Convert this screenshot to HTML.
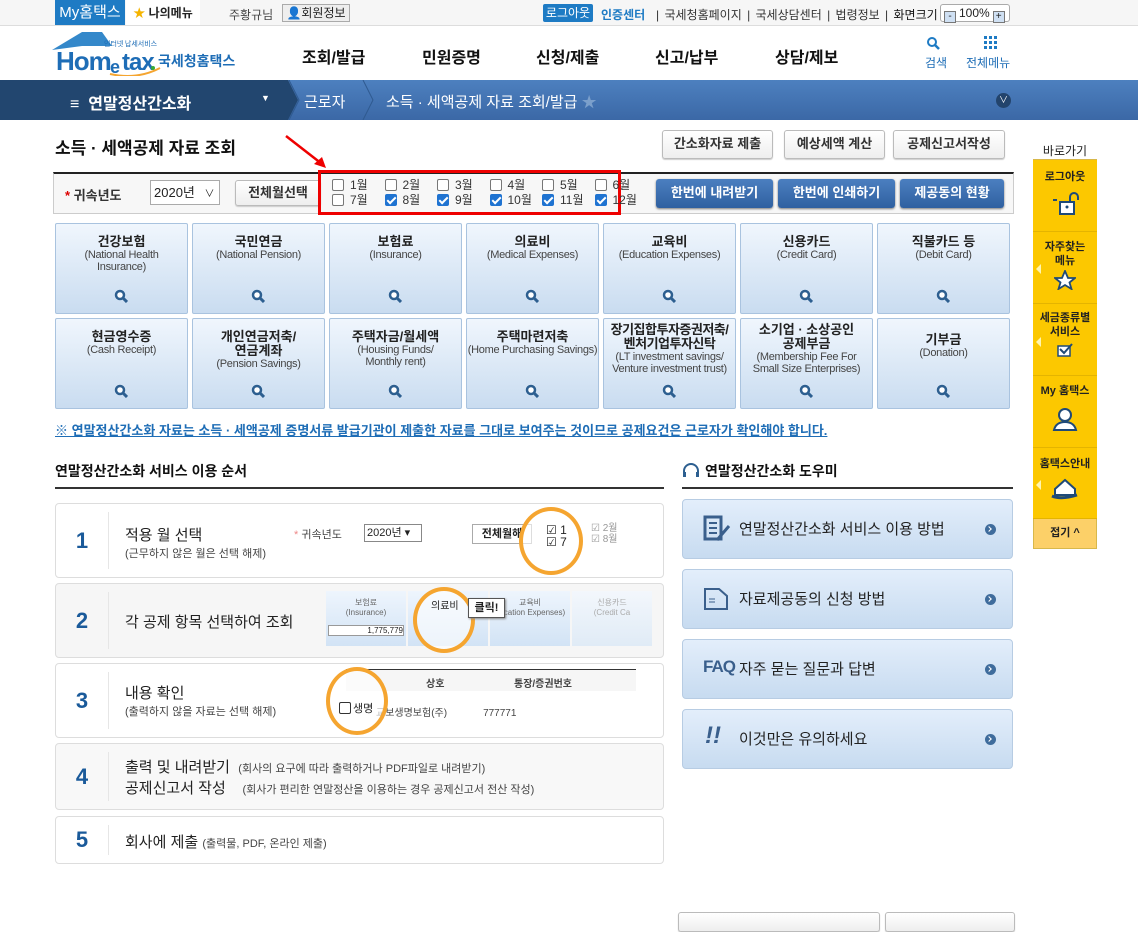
<!DOCTYPE html>
<html><head><meta charset="utf-8">
<style>
*{margin:0;padding:0;box-sizing:border-box}
body{width:1138px;height:920px;overflow:hidden;background:#fff;font-family:"Liberation Sans","Noto Sans CJK KR","NanumGothic",sans-serif;color:#222;position:relative;font-size:12px}
.a{position:absolute}
.top{left:0;top:0;width:1138px;height:26px;background:#f6f6f6;border-bottom:1px solid #ddd}
.nav{left:0;top:80px;width:1138px;height:40px;background:linear-gradient(#4d80bf,#3b68a6)}
.menu{top:44px;font-size:16px;font-weight:bold;color:#111}
.btn{border:1px solid #bbb;border-radius:3px;background:linear-gradient(#fff,#eee);font-size:13px;font-weight:bold;color:#333;text-align:center;line-height:26px;box-shadow:0 1px 1px #ccc}
.bb{border-radius:3px;background:linear-gradient(#4b7fc0,#2f60a0);color:#fff;font-size:13px;font-weight:bold;text-align:center;line-height:28px;box-shadow:0 1px 2px #777}
.cell{width:133px;height:91px;border:1px solid #a9c3df;border-radius:2px;background:linear-gradient(#f0f6fd,#c9dcf0);text-align:center;padding-top:11px}
.cell b{display:block;font-size:13px;color:#222;line-height:14px}
.cell span{display:block;font-size:11px;color:#444;line-height:12px;letter-spacing:-.3px}
.mg{position:absolute;left:58px;bottom:10px;width:14px;height:14px}
.cb{display:inline-block;width:12px;height:12px;border:1px solid #777;border-radius:2px;background:#fff;vertical-align:-2px;margin-right:6px}
.ck{background:#1f73d1;border-color:#1f73d1;position:relative}
.ck:after{content:"";position:absolute;left:3px;top:0px;width:3px;height:7px;border:solid #fff;border-width:0 2px 2px 0;transform:rotate(45deg)}
.row{display:flex;width:330px;height:15px}
.mo{flex:0 0 52.5px;white-space:nowrap}
.step{left:55px;width:609px;border:1px solid #ddd;border-radius:4px;background:#fff}
.step .n{position:absolute;left:0;width:52px;text-align:center;font-size:22px;font-weight:bold;color:#1a5a9a;top:50%;transform:translateY(-50%)}
.step .sep{position:absolute;left:52px;top:8px;bottom:8px;border-left:1px solid #e6e6e6}
.st{position:absolute;left:69px;font-size:15px;color:#222}
.sub{font-size:11px;color:#444}
.rb{left:682px;width:331px;height:60px;border:1px solid #b7cce3;border-radius:4px;background:linear-gradient(#e3eefb,#c7dbf0);font-size:15px;color:#222}
.rb .t{position:absolute;left:56px;top:18px}
.rb .ar{position:absolute;right:16px;top:24px;width:11px;height:11px;border-radius:50%;background:#3f6c9c}
.rb .ar:after{content:"";position:absolute;left:2px;top:3px;width:3px;height:3px;border:solid #fff;border-width:1.5px 1.5px 0 0;transform:rotate(45deg)}
.sb{left:1033px;width:64px;background:#fcc800;border-bottom:1px solid #e4b400;text-align:center;font-size:11px;font-weight:bold;color:#222;line-height:14px}
.ring{position:absolute;border:4px solid #f5a530;border-radius:50%;background:rgba(255,255,255,.6)}
</style></head><body>

<div class="a top"></div>
<div class="a" style="left:55px;top:0;width:70px;height:25px;background:#1e7bc4;color:#fff;font-size:15px;line-height:25px;text-align:center">My홈택스</div>
<div class="a" style="left:126px;top:0;width:74px;height:25px;background:#fff;font-size:12px;font-weight:bold;line-height:26px;text-align:center"><span style="color:#f5b400">★</span> 나의메뉴</div>
<div class="a" style="left:229px;top:6px;font-size:12px;color:#444">주황규님</div>
<div class="a" style="left:282px;top:4px;width:68px;height:18px;border:1px solid #aaa;background:#eee;font-size:12px;line-height:16px;text-align:center">👤회원정보</div>
<div class="a" style="left:543px;top:4px;width:50px;height:18px;background:#1e7bc4;color:#fff;border-radius:2px;font-size:12px;line-height:18px;text-align:center">로그아웃</div>
<div class="a" style="left:601px;top:6px;font-size:12px;font-weight:bold;color:#1e7bc4">인증센터</div>
<div class="a" style="left:656px;top:6px;font-size:12px;color:#333;word-spacing:2px">| 국세청홈페이지 | 국세상담센터 | 법령정보 | <span style="color:#111">화면크기</span></div>
<div class="a" style="left:940px;top:4px;width:70px;height:18px;border:1px solid #aaa;border-radius:3px;background:#fff;font-size:12px;line-height:16px">
<span style="display:inline-block;width:12px;height:12px;margin:1px 3px;border:1px solid #777;background:#cfe0f3;font-size:10px;line-height:10px;text-align:center;vertical-align:-2px">-</span>100%<span style="display:inline-block;width:12px;height:12px;margin:1px 3px;border:1px solid #777;background:#cfe0f3;font-size:10px;line-height:10px;text-align:center;vertical-align:-2px">+</span></div>

<!-- logo -->
<svg class="a" style="left:52px;top:30px" width="190" height="46" viewBox="0 0 190 46">
<polygon points="0,20 30,2 50,2 60,16 30,16" fill="#1e7bc4" opacity=".9"/>
<text x="4" y="40" font-family="Liberation Sans" font-weight="bold" font-size="26" fill="#1e6db6" letter-spacing="-1">Hom</text>
<text x="58" y="43" font-family="Liberation Sans" font-weight="bold" font-size="18" fill="#1e6db6">e</text>
<text x="70" y="40" font-family="Liberation Sans" font-weight="bold" font-size="24" fill="#1e6db6" letter-spacing="-1">tax</text>
<circle cx="101" cy="38" r="2" fill="#3aaa35"/>
<path d="M58 44 Q85 50 108 38" fill="none" stroke="#f5a530" stroke-width="2"/>
<text x="52" y="16" font-size="7" fill="#1e6db6" font-family="Noto Sans CJK KR">인터넷 납세서비스</text>
<text x="106" y="36" font-size="14" font-weight="bold" fill="#1e6db6" font-family="Noto Sans CJK KR">국세청홈택스</text>
</svg>

<div class="a menu" style="left:302px">조회/발급</div>
<div class="a menu" style="left:422px">민원증명</div>
<div class="a menu" style="left:536px">신청/제출</div>
<div class="a menu" style="left:655px">신고/납부</div>
<div class="a menu" style="left:775px">상담/제보</div>
<svg class="a" style="left:926px;top:36px" width="14" height="14"><circle cx="6" cy="6" r="4" fill="none" stroke="#1e7bc4" stroke-width="2"/><line x1="9" y1="9" x2="13" y2="13" stroke="#1e7bc4" stroke-width="2.5"/></svg>
<div class="a" style="left:925px;top:54px;font-size:12px;color:#1e6db6">검색</div>
<svg class="a" style="left:984px;top:36px" width="14" height="14" fill="#1e7bc4"><rect x="0" y="0" width="3" height="3"/><rect x="5" y="0" width="3" height="3"/><rect x="10" y="0" width="3" height="3"/><rect x="0" y="5" width="3" height="3"/><rect x="5" y="5" width="3" height="3"/><rect x="10" y="5" width="3" height="3"/><rect x="0" y="10" width="3" height="3"/><rect x="5" y="10" width="3" height="3"/><rect x="10" y="10" width="3" height="3"/></svg>
<div class="a" style="left:966px;top:54px;font-size:12px;color:#1e6db6">전체메뉴</div>

<!-- nav -->
<div class="a nav"></div>
<div class="a" style="left:0;top:80px;width:263px;height:40px;background:#22466f"></div>
<svg class="a" style="left:263px;top:80px" width="120" height="40"><polygon points="0,0 25,0 35,20 25,40 0,40" fill="#22466f"/><polyline points="100,0 110,20 100,40" fill="none" stroke="#2f5a90" stroke-width="1"/><polyline points="26,0 36,20 26,40" fill="none" stroke="#2f5a90"/></svg>
<div class="a" style="left:70px;top:90px;color:#fff;font-size:16px;font-weight:bold">≡&nbsp; 연말정산간소화</div>
<div class="a" style="left:261px;top:93px;color:#fff;font-size:9px">▼</div>
<div class="a" style="left:304px;top:91px;color:#fff;font-size:15px">근로자</div>
<div class="a" style="left:386px;top:91px;color:#fff;font-size:15px">소득 · 세액공제 자료 조회/발급 <span style="color:#7b9fcb">★</span></div>
<div class="a" style="left:996px;top:93px;width:15px;height:15px;border-radius:50%;background:#23446c;color:#fff;font-size:9px;text-align:center;line-height:15px">∨</div>

<!-- title -->
<div class="a" style="left:55px;top:134px;font-size:17px;font-weight:bold;color:#111">소득 · 세액공제 자료 조회</div>
<svg class="a" style="left:284px;top:134px" width="45" height="36"><line x1="2" y1="2" x2="38" y2="30" stroke="#e00" stroke-width="2.5"/><polygon points="42,34 30,30 38,23" fill="#e00"/></svg>
<div class="a btn" style="left:662px;top:130px;width:111px;height:29px">간소화자료 제출</div>
<div class="a btn" style="left:784px;top:130px;width:101px;height:29px">예상세액 계산</div>
<div class="a btn" style="left:893px;top:130px;width:112px;height:29px">공제신고서작성</div>

<!-- filter row -->
<div class="a" style="left:53px;top:172px;width:961px;height:42px;background:#f7f7f7;border:1px solid #ccc;border-top:2px solid #222"></div>
<div class="a" style="left:65px;top:185px;font-size:13px;font-weight:bold;color:#333"><span style="color:#d00">*</span> 귀속년도</div>
<div class="a" style="left:150px;top:180px;width:70px;height:25px;border:1px solid #aaa;background:#fff;font-size:13px;line-height:23px;padding-left:3px">2020년 <span style="font-size:10px;margin-left:6px">∨</span></div>
<div class="a btn" style="left:235px;top:180px;width:86px;height:26px;line-height:24px">전체월선택</div>
<div class="a" style="left:318px;top:170px;width:303px;height:45px;border:3px solid #e00"></div>
<div class="a" style="left:332px;top:178px;font-size:12px;line-height:15px;color:#333">
<div class="row"><span class="mo"><span class="cb"></span>1월</span><span class="mo"><span class="cb"></span>2월</span><span class="mo"><span class="cb"></span>3월</span><span class="mo"><span class="cb"></span>4월</span><span class="mo"><span class="cb"></span>5월</span><span class="mo"><span class="cb"></span>6월</span></div>
<div class="row"><span class="mo"><span class="cb"></span>7월</span><span class="mo"><span class="cb ck"></span>8월</span><span class="mo"><span class="cb ck"></span>9월</span><span class="mo"><span class="cb ck"></span>10월</span><span class="mo"><span class="cb ck"></span>11월</span><span class="mo"><span class="cb ck"></span>12월</span></div>
</div>
<div class="a bb" style="left:656px;top:179px;width:117px;height:29px">한번에 내려받기</div>
<div class="a bb" style="left:778px;top:179px;width:117px;height:29px">한번에 인쇄하기</div>
<div class="a bb" style="left:900px;top:179px;width:104px;height:29px">제공동의 현황</div>

<!-- grid -->
<div class="a cell" style="left:55px;top:223px"><b>건강보험</b><span>(National Health<br>Insurance)</span><svg class="mg"><circle cx="6" cy="6" r="4" fill="#fff" stroke="#2d5f90" stroke-width="2.5"/><line x1="9" y1="9" x2="13" y2="13" stroke="#2d5f90" stroke-width="3"/></svg></div>
<div class="a cell" style="left:192px;top:223px"><b>국민연금</b><span>(National Pension)</span><svg class="mg"><circle cx="6" cy="6" r="4" fill="#fff" stroke="#2d5f90" stroke-width="2.5"/><line x1="9" y1="9" x2="13" y2="13" stroke="#2d5f90" stroke-width="3"/></svg></div>
<div class="a cell" style="left:329px;top:223px"><b>보험료</b><span>(Insurance)</span><svg class="mg"><circle cx="6" cy="6" r="4" fill="#fff" stroke="#2d5f90" stroke-width="2.5"/><line x1="9" y1="9" x2="13" y2="13" stroke="#2d5f90" stroke-width="3"/></svg></div>
<div class="a cell" style="left:466px;top:223px"><b>의료비</b><span>(Medical Expenses)</span><svg class="mg"><circle cx="6" cy="6" r="4" fill="#fff" stroke="#2d5f90" stroke-width="2.5"/><line x1="9" y1="9" x2="13" y2="13" stroke="#2d5f90" stroke-width="3"/></svg></div>
<div class="a cell" style="left:603px;top:223px"><b>교육비</b><span>(Education Expenses)</span><svg class="mg"><circle cx="6" cy="6" r="4" fill="#fff" stroke="#2d5f90" stroke-width="2.5"/><line x1="9" y1="9" x2="13" y2="13" stroke="#2d5f90" stroke-width="3"/></svg></div>
<div class="a cell" style="left:740px;top:223px"><b>신용카드</b><span>(Credit Card)</span><svg class="mg"><circle cx="6" cy="6" r="4" fill="#fff" stroke="#2d5f90" stroke-width="2.5"/><line x1="9" y1="9" x2="13" y2="13" stroke="#2d5f90" stroke-width="3"/></svg></div>
<div class="a cell" style="left:877px;top:223px"><b>직불카드 등</b><span>(Debit Card)</span><svg class="mg"><circle cx="6" cy="6" r="4" fill="#fff" stroke="#2d5f90" stroke-width="2.5"/><line x1="9" y1="9" x2="13" y2="13" stroke="#2d5f90" stroke-width="3"/></svg></div>

<div class="a cell" style="left:55px;top:318px"><b>현금영수증</b><span>(Cash Receipt)</span><svg class="mg"><circle cx="6" cy="6" r="4" fill="#fff" stroke="#2d5f90" stroke-width="2.5"/><line x1="9" y1="9" x2="13" y2="13" stroke="#2d5f90" stroke-width="3"/></svg></div>
<div class="a cell" style="left:192px;top:318px"><b>개인연금저축/<br>연금계좌</b><span>(Pension Savings)</span><svg class="mg"><circle cx="6" cy="6" r="4" fill="#fff" stroke="#2d5f90" stroke-width="2.5"/><line x1="9" y1="9" x2="13" y2="13" stroke="#2d5f90" stroke-width="3"/></svg></div>
<div class="a cell" style="left:329px;top:318px"><b>주택자금/월세액</b><span>(Housing Funds/<br>Monthly rent)</span><svg class="mg"><circle cx="6" cy="6" r="4" fill="#fff" stroke="#2d5f90" stroke-width="2.5"/><line x1="9" y1="9" x2="13" y2="13" stroke="#2d5f90" stroke-width="3"/></svg></div>
<div class="a cell" style="left:466px;top:318px"><b>주택마련저축</b><span>(Home Purchasing Savings)</span><svg class="mg"><circle cx="6" cy="6" r="4" fill="#fff" stroke="#2d5f90" stroke-width="2.5"/><line x1="9" y1="9" x2="13" y2="13" stroke="#2d5f90" stroke-width="3"/></svg></div>
<div class="a cell" style="left:603px;top:318px;padding-top:4px"><b style="letter-spacing:-.5px">장기집합투자증권저축/<br>벤처기업투자신탁</b><span>(LT investment savings/<br>Venture investment trust)</span><svg class="mg"><circle cx="6" cy="6" r="4" fill="#fff" stroke="#2d5f90" stroke-width="2.5"/><line x1="9" y1="9" x2="13" y2="13" stroke="#2d5f90" stroke-width="3"/></svg></div>
<div class="a cell" style="left:740px;top:318px;padding-top:4px"><b>소기업 · 소상공인<br>공제부금</b><span>(Membership Fee For<br>Small Size Enterprises)</span><svg class="mg"><circle cx="6" cy="6" r="4" fill="#fff" stroke="#2d5f90" stroke-width="2.5"/><line x1="9" y1="9" x2="13" y2="13" stroke="#2d5f90" stroke-width="3"/></svg></div>
<div class="a cell" style="left:877px;top:318px;padding-top:14px"><b>기부금</b><span>(Donation)</span><svg class="mg"><circle cx="6" cy="6" r="4" fill="#fff" stroke="#2d5f90" stroke-width="2.5"/><line x1="9" y1="9" x2="13" y2="13" stroke="#2d5f90" stroke-width="3"/></svg></div>

<div class="a" style="left:55px;top:420px;font-size:13px;font-weight:bold;color:#1e6db6;text-decoration:underline">※ 연말정산간소화 자료는 소득 · 세액공제 증명서류 발급기관이 제출한 자료를 그대로 보여주는 것이므로 공제요건은 근로자가 확인해야 합니다.</div>

<!-- left section -->
<div class="a" style="left:55px;top:461px;font-size:14px;font-weight:bold;color:#111">연말정산간소화 서비스 이용 순서</div>
<div class="a" style="left:55px;top:487px;width:609px;height:2px;background:#333"></div>

<div class="a step" style="top:503px;height:75px"><div class="n">1</div><div class="sep"></div>
<div class="st" style="top:20px">적용 월 선택<div class="sub">(근무하지 않은 월은 선택 해제)</div></div>
<div class="a" style="left:238px;top:22px;font-size:11px;color:#444"><span style="color:#e88">*</span> 귀속년도</div>
<div class="a" style="left:308px;top:20px;width:58px;height:18px;border:1px solid #888;font-size:11px;line-height:16px;padding-left:2px">2020년 ▾</div>
<div class="a" style="left:416px;top:20px;width:60px;height:20px;border:1px solid #aaa;font-size:11px;font-weight:bold;line-height:18px;text-align:center">전체월해</div>
<div class="a" style="left:535px;top:19px;font-size:10px;color:#999;line-height:11px">☑ 2월<br>☑ 8월</div>
<div class="ring" style="left:463px;top:3px;width:64px;height:68px"></div>
<div class="a" style="left:490px;top:20px;font-size:12px;line-height:12px">☑ 1<br>☑ 7</div>
</div>

<div class="a step" style="top:583px;height:75px;background:#f6f6f6"><div class="n">2</div><div class="sep"></div>
<div class="st" style="top:27px">각 공제 항목 선택하여 조회</div>
<div class="a" style="left:270px;top:7px;width:80px;height:55px;background:linear-gradient(#eef5fd,#d2e3f5);text-align:center;font-size:8px;color:#666;padding-top:6px">보험료<br>(Insurance)<div style="margin:8px 2px 0;background:#fff;border:1px solid #999;font-size:8px;text-align:right;color:#222">1,775,779</div></div>
<div class="a" style="left:352px;top:7px;width:80px;height:55px;background:linear-gradient(#eef5fd,#d2e3f5)"></div>
<div class="a" style="left:434px;top:7px;width:80px;height:55px;background:linear-gradient(#eef5fd,#d2e3f5);text-align:center;font-size:8px;color:#666;padding-top:6px">교육비<br>ducation Expenses)</div>
<div class="a" style="left:516px;top:7px;width:80px;height:55px;background:linear-gradient(#f3f7fc,#e0ebf6);text-align:center;font-size:8px;color:#aaa;padding-top:6px">신용카드<br>(Credit Ca</div>
<div class="ring" style="left:357px;top:3px;width:62px;height:66px"></div>
<div class="a" style="left:375px;top:13px;font-size:10px">의료비</div>
<div class="a" style="left:412px;top:14px;width:37px;height:20px;background:#fff;border:1px solid #555;font-size:11px;font-weight:bold;text-align:center;line-height:18px;box-shadow:1px 1px 2px #888">클릭!</div>
</div>

<div class="a step" style="top:663px;height:75px"><div class="n">3</div><div class="sep"></div>
<div class="st" style="top:18px">내용 확인<div class="sub">(출력하지 않을 자료는 선택 해제)</div></div>
<div class="a" style="left:290px;top:5px;width:290px;height:22px;border-top:1px solid #333;background:#f6f6f6;font-size:10px;font-weight:bold;color:#444"><span style="position:absolute;left:80px;top:5px">상호</span><span style="position:absolute;left:168px;top:5px">통장/증권번호</span></div>
<div class="a" style="left:320px;top:40px;font-size:10px;color:#444">교보생명보험(주)<span style="margin-left:36px">777771</span></div>
<div class="ring" style="left:270px;top:3px;width:62px;height:68px"></div>
<div class="a" style="left:283px;top:36px;font-size:11px"><span class="cb" style="border-color:#333;margin-right:2px"></span>생명</div>
</div>

<div class="a step" style="top:743px;height:67px;background:#f8f8f8"><div class="n">4</div><div class="sep"></div>
<div class="st" style="top:14px;line-height:19px">출력 및 내려받기 &nbsp;<span class="sub">(회사의 요구에 따라 출력하거나 PDF파일로 내려받기)</span><br>공제신고서 작성 &nbsp;&nbsp;&nbsp;<span class="sub">(회사가 편리한 연말정산을 이용하는 경우 공제신고서 전산 작성)</span></div></div>

<div class="a step" style="top:816px;height:48px"><div class="n">5</div><div class="sep"></div>
<div class="st" style="top:14px">회사에 제출 <span class="sub">(출력물, PDF, 온라인 제출)</span></div></div>

<!-- right section -->
<svg class="a" style="left:681px;top:462px" width="20" height="18"><path d="M3 12 V9 A7 7 0 0 1 17 9 V12" fill="none" stroke="#2d5f90" stroke-width="2"/><rect x="2" y="10" width="3" height="5" fill="#2d5f90"/><rect x="15" y="10" width="3" height="5" fill="#2d5f90"/></svg>
<div class="a" style="left:705px;top:461px;font-size:14px;font-weight:bold;color:#111">연말정산간소화 도우미</div>
<div class="a" style="left:682px;top:487px;width:331px;height:2px;background:#333"></div>

<div class="a rb" style="top:499px"><svg class="a" style="left:20px;top:15px" width="28" height="28"><rect x="2" y="2" width="16" height="22" fill="none" stroke="#3a5f8c" stroke-width="3"/><line x1="6" y1="8" x2="14" y2="8" stroke="#3a5f8c" stroke-width="2"/><line x1="6" y1="13" x2="14" y2="13" stroke="#3a5f8c" stroke-width="2"/><line x1="6" y1="18" x2="14" y2="18" stroke="#3a5f8c" stroke-width="2"/><line x1="14" y1="25" x2="26" y2="11" stroke="#3a5f8c" stroke-width="3"/></svg><span class="t">연말정산간소화 서비스 이용 방법</span><span class="ar"></span></div>
<div class="a rb" style="top:569px"><svg class="a" style="left:20px;top:17px" width="26" height="24"><path d="M2 2 H16 L24 9 V22 H2 Z" fill="none" stroke="#3a5f8c" stroke-width="2"/><line x1="6" y1="12" x2="12" y2="12" stroke="#3a5f8c"/><line x1="6" y1="15" x2="12" y2="15" stroke="#3a5f8c"/></svg><span class="t">자료제공동의 신청 방법</span><span class="ar"></span></div>
<div class="a rb" style="top:639px"><span class="a" style="left:20px;top:17px;font-weight:bold;font-size:17px;color:#3a5f8c;letter-spacing:-1px">FAQ</span><span class="t">자주 묻는 질문과 답변</span><span class="ar"></span></div>
<div class="a rb" style="top:709px"><span class="a" style="left:22px;top:12px;font-weight:bold;font-size:24px;color:#3a5f8c;font-style:italic">!!</span><span class="t">이것만은 유의하세요</span><span class="ar"></span></div>

<!-- sidebar -->
<div class="a" style="left:1033px;top:142px;width:64px;text-align:center;font-size:12px;color:#222">바로가기</div>
<div class="a" style="left:1033px;top:159px;width:64px;height:390px;border:1px solid #d8b84a"></div>
<div class="a sb" style="top:160px;height:72px;padding-top:10px">로그아웃<svg style="display:block;margin:8px auto 0" width="30" height="24"><rect x="10" y="10" width="14" height="12" fill="#fff" stroke="#1f4a78" stroke-width="2"/><path d="M20 10 V5 A4 4 0 0 1 28 5 V8" fill="none" stroke="#1f4a78" stroke-width="2"/><circle cx="17" cy="15" r="1.5" fill="#1f4a78"/><line x1="3" y1="8" x2="7" y2="8" stroke="#1f4a78" stroke-width="2"/></svg></div>
<div class="a sb" style="top:232px;height:72px;padding-top:8px">자주찾는<br>메뉴<svg style="display:block;margin:2px auto 0" width="22" height="20"><polygon points="11,1 14,8 21,8 15.5,12.5 17.5,19 11,15 4.5,19 6.5,12.5 1,8 8,8" fill="#fff" stroke="#1f4a78" stroke-width="1.8"/></svg></div>
<div class="a sb" style="top:304px;height:72px;padding-top:7px">세금종류별<br>서비스<svg style="display:block;margin:4px auto 0" width="16" height="14"><rect x="1" y="3" width="12" height="10" fill="#fff" stroke="#1f4a78" stroke-width="1.5"/><path d="M3 6 L7 10 L15 1" fill="none" stroke="#1f4a78" stroke-width="2"/></svg></div>
<div class="a sb" style="top:376px;height:72px;padding-top:8px">My 홈택스<svg style="display:block;margin:9px auto 0" width="26" height="24"><circle cx="13" cy="8" r="6" fill="#fff" stroke="#1f4a78" stroke-width="2"/><path d="M2 23 Q4 15 13 15 Q22 15 24 23 Z" fill="#fff" stroke="#1f4a78" stroke-width="2"/></svg></div>
<div class="a sb" style="top:448px;height:71px;padding-top:9px">홈택스안내<svg style="display:block;margin:6px auto 0" width="28" height="24"><path d="M4 12 L14 3 L24 12 V18 H4 Z" fill="#fff" stroke="#1f4a78" stroke-width="2"/><path d="M1 19 Q10 23 26 18" fill="none" stroke="#1f4a78" stroke-width="3"/></svg></div>
<div class="a" style="left:1034px;top:519px;width:62px;height:29px;background:#fcd068;text-align:center;font-size:11px;font-weight:bold;line-height:29px">접기 ^</div>
<div class="a" style="left:1036px;top:264px;width:0;height:0;border:5px solid transparent;border-right-color:#fff5b0;border-left:0"></div>
<div class="a" style="left:1036px;top:337px;width:0;height:0;border:5px solid transparent;border-right-color:#fff5b0;border-left:0"></div>
<div class="a" style="left:1036px;top:480px;width:0;height:0;border:5px solid transparent;border-right-color:#fff5b0;border-left:0"></div>

<!-- bottom buttons -->
<div class="a btn" style="left:678px;top:912px;width:202px;height:20px"></div>
<div class="a btn" style="left:885px;top:912px;width:130px;height:20px"></div>
</body></html>
